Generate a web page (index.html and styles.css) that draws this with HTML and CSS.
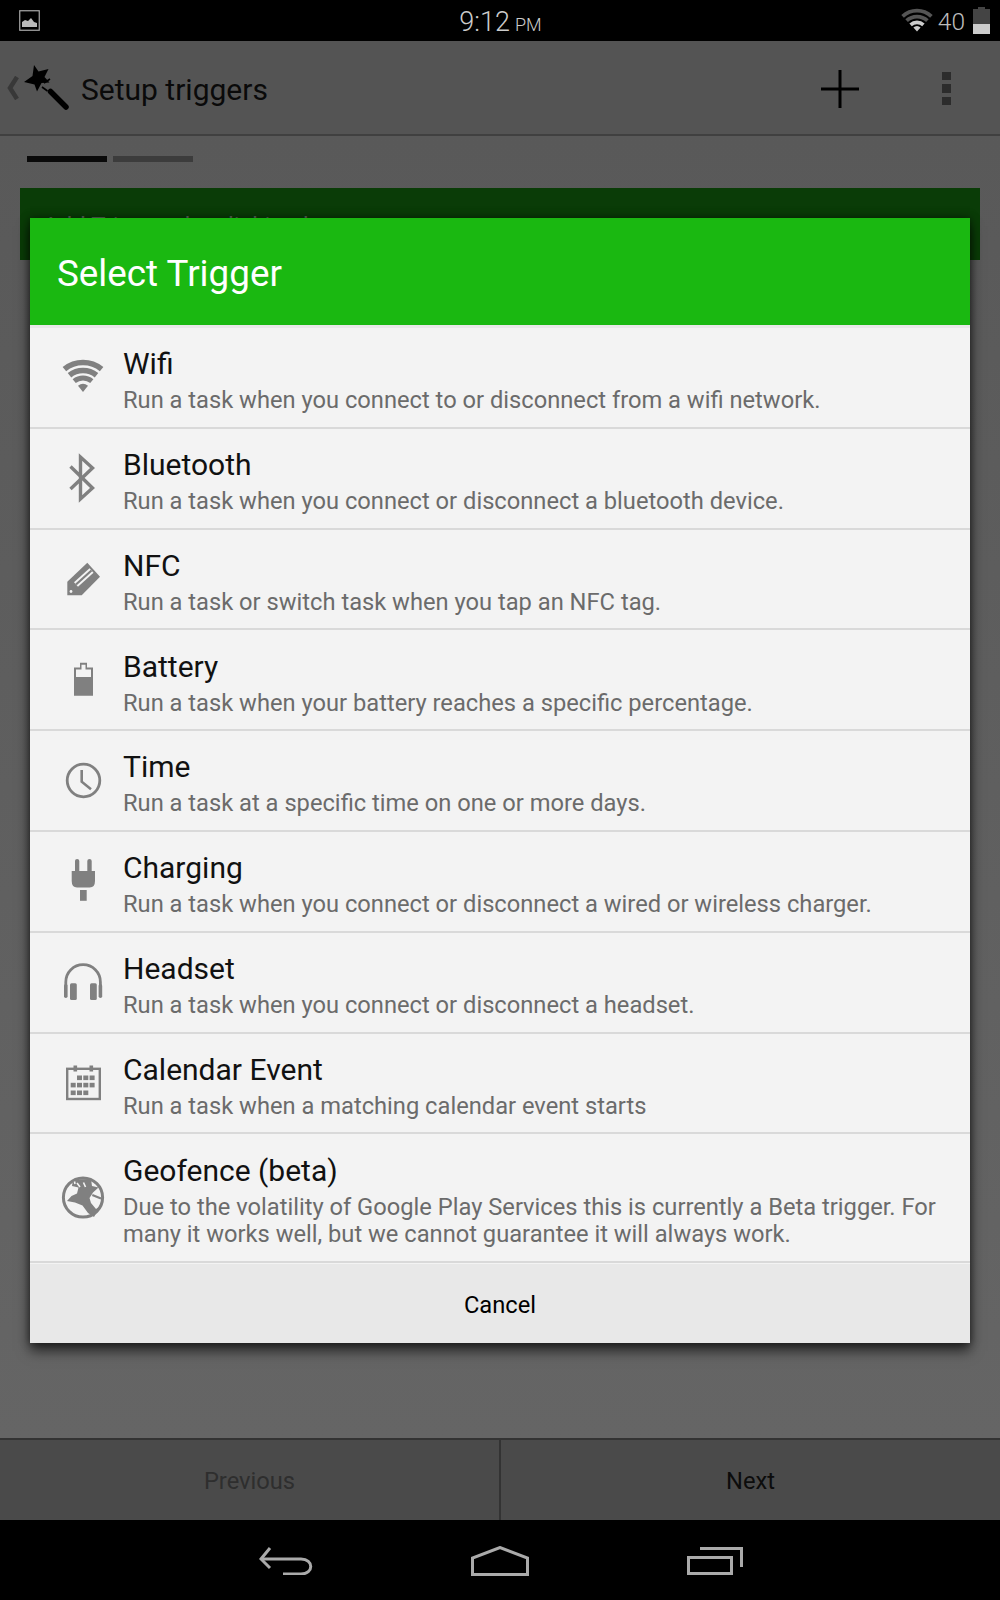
FILE: index.html
```html
<!DOCTYPE html>
<html lang="en">
<head>
  <meta charset="UTF-8" />
  <title>Setup triggers</title>
  <link rel="stylesheet" href="styles.css">
</head>
<body>
  <div class="page">
    <!-- Status bar -->
    <div class="status-bar">
      <svg class="status-image" viewBox="0 0 21 21">
        <rect x="0.75" y="0.75" width="19.5" height="19.5" fill="none" stroke="#aaa" stroke-width="1.2"/>
        <path d="M3 17 V12 L6 10 L9 11 L12 8 L15 12 L18 13 V17z" fill="#bbb"/>
      </svg>
      <div class="status-time">9:12<span class="status-ampm">PM</span></div>
      <div class="status-right">
        <svg class="status-wifi" viewBox="0 0 32 24">
          <g fill="none" stroke-width="3.8">
            <path d="M1.6 8.4 A21 21 0 0 1 30.4 8.4" stroke="#555"/>
            <path d="M5.6 12.7 A15.2 15.2 0 0 1 26.4 12.7" stroke="#555"/>
          </g>
          <path d="M9.6 16.9 A9.4 9.4 0 0 1 22.4 16.9" fill="none" stroke="#ccc" stroke-width="3.6"/>
          <path d="M16 23.5 L12.4 19.6 A5 5 0 0 1 19.6 19.6z" fill="#ccc"/>
        </svg>
        <span class="status-level">40</span>
        <div class="status-battery"><div class="status-charge"></div></div>
      </div>
    </div>

    <!-- Action bar -->
    <div class="action-bar">
      <svg class="up-arrow" viewBox="0 0 12 24"><path d="M10 1 L3 12 L10 23" fill="none" stroke="#383838" stroke-width="4.5"/></svg>
      <svg class="wand" viewBox="0 0 46 46">
        <path d="M11 0 L15.5 6.5 L25.5 4 L21.5 12 L26.5 17.5 L18.5 18 L14 26.5 L11.5 19.5 L1 17 L9.5 11z" fill="#000"/>
        <path d="M27.5 26.5 L43 42" stroke="#000" stroke-width="5.5" stroke-linecap="round"/>
        <path d="M21 18 L27 14 M19 22 L24.5 26" stroke="#000" stroke-width="1.6"/>
      </svg>
      <div class="action-title">Setup triggers</div>
      <div class="action-buttons">
        <svg class="plus" viewBox="0 0 38 38"><path d="M19 0 V38 M0 19 H38" stroke="#000" stroke-width="3"/></svg>
        <div class="overflow"><span></span><span></span><span></span></div>
      </div>
    </div>

    <!-- Wizard content under the dialog -->
    <div class="content">
      <div class="steps"><div class="step step-on"></div><div class="step"></div></div>
      <div class="banner">Add Triggers by clicking here</div>
    </div>

    <div class="wizard-nav">
      <div class="wizard-btn wizard-off">Previous</div>
      <div class="wizard-btn">Next</div>
    </div>

    <!-- System nav -->
    <div class="system-nav">
      <svg class="nav-back" viewBox="0 0 54 28" fill="none" stroke="#aaa" stroke-width="3">
        <path d="M11 1 L2 12 L11 21"/>
        <path d="M2 12 H42 C55 12 55 27 42 27 H24"/>
      </svg>
      <svg class="nav-home" viewBox="0 0 58 30" fill="none" stroke="#aaa" stroke-width="3">
        <path d="M1.5 28.5 V12 L29 1.5 L56.5 12 V28.5z"/>
      </svg>
      <svg class="nav-recent" viewBox="0 0 56 28" fill="none" stroke="#aaa" stroke-width="3">
        <rect x="1.5" y="10.5" width="43" height="16"/>
        <path d="M13 1.5 H54.5 V20"/>
      </svg>
    </div>
  </div>

  <!-- Select Trigger dialog -->
  <div class="dialog">
    <div class="dialog-title">Select Trigger</div>
    <div class="trigger-list">
      <div class="trigger">
        <svg class="trigger-icon" viewBox="0 0 44 52">
          <g fill="none" class="ico-stroke">
            <path d="M3.4 18.1 A29.5 29.5 0 0 1 40.6 18.1" stroke-width="5.6"/>
            <path d="M8.5 24.3 A21.5 21.5 0 0 1 35.5 24.3" stroke-width="5.6"/>
            <path d="M13.2 30.1 A14 14 0 0 1 30.8 30.1" stroke-width="5"/>
          </g>
          <path class="ico-fill" d="M22 41 L17 34.8 A8 8 0 0 1 27 34.8z"/>
        </svg>
        <div class="trigger-text">
          <div class="trigger-name">Wifi</div>
          <div class="trigger-desc">Run a task when you connect to or disconnect from a wifi network.</div>
        </div>
      </div>
      <div class="trigger">
        <svg class="trigger-icon" viewBox="0 0 44 52">
          <path class="ico-stroke" fill="none" stroke-width="3.4" d="M9.5 14.5 L31.5 36 L19.5 47 V5 L31.5 16 L9.5 37"/>
        </svg>
        <div class="trigger-text">
          <div class="trigger-name">Bluetooth</div>
          <div class="trigger-desc">Run a task when you connect or disconnect a bluetooth device.</div>
        </div>
      </div>
      <div class="trigger">
        <svg class="trigger-icon" viewBox="0 0 44 52">
          <path class="ico-fill" d="M6.3 42.2 V28.8 L26.3 9.8 L39 23.8 L20.7 42.2z"/>
          <path d="M15 31.5 L30.5 17.5" stroke="#f3f3f3" stroke-width="6"/>
          <path d="M15 31.5 L30.5 17.5" class="ico-stroke" stroke-width="2.2"/>
          <circle cx="10" cy="38.5" r="1.4" fill="#f3f3f3"/>
        </svg>
        <div class="trigger-text">
          <div class="trigger-name">NFC</div>
          <div class="trigger-desc">Run a task or switch task when you tap an NFC tag.</div>
        </div>
      </div>
      <div class="trigger">
        <svg class="trigger-icon" viewBox="0 0 44 52">
          <path class="ico-fill" d="M13 41.7 V13.5 H19 V8.7 H26 V13.5 H32 V41.7z"/>
          <path d="M15 23 V15.5 H20.5 V10.7 H24.5 V15.5 H30 V23z" fill="#f3f3f3"/>
        </svg>
        <div class="trigger-text">
          <div class="trigger-name">Battery</div>
          <div class="trigger-desc">Run a task when your battery reaches a specific percentage.</div>
        </div>
      </div>
      <div class="trigger">
        <svg class="trigger-icon" viewBox="0 0 44 52">
          <circle class="ico-stroke" cx="22.5" cy="25.5" r="16.3" fill="none" stroke-width="2.8"/>
          <path class="ico-stroke" d="M20.7 15 V26.7 L30 34.3" fill="none" stroke-width="2.6"/>
        </svg>
        <div class="trigger-text">
          <div class="trigger-name">Time</div>
          <div class="trigger-desc">Run a task at a specific time on one or more days.</div>
        </div>
      </div>
      <div class="trigger">
        <svg class="trigger-icon" viewBox="0 0 44 52">
          <path class="ico-fill" d="M14 6 Q14 4 16.1 4 Q18.3 4 18.3 6 V16 H26.3 V6 Q26.3 4 28.5 4 Q30.7 4 30.7 6 V16 H34 V26 Q34 32.5 28.7 32.5 H16 Q10.7 32.5 10.7 26 V16 H14z"/>
          <rect class="ico-fill" x="19" y="35" width="6.7" height="10.8"/>
        </svg>
        <div class="trigger-text">
          <div class="trigger-name">Charging</div>
          <div class="trigger-desc">Run a task when you connect or disconnect a wired or wireless charger.</div>
        </div>
      </div>
      <div class="trigger">
        <svg class="trigger-icon" viewBox="0 0 44 52">
          <path class="ico-stroke" d="M4.8 30 V26 A17.3 17.3 0 0 1 39.4 26 V30" fill="none" stroke-width="2.8"/>
          <rect class="ico-fill" x="3" y="28" width="3.6" height="14" rx="1.8"/>
          <rect class="ico-fill" x="37.6" y="28" width="3.6" height="14" rx="1.8"/>
          <rect class="ico-fill" x="9" y="27.3" width="6.8" height="16.7" rx="1.5"/>
          <rect class="ico-fill" x="29" y="27.3" width="6.8" height="16.7" rx="1.5"/>
        </svg>
        <div class="trigger-text">
          <div class="trigger-name">Headset</div>
          <div class="trigger-desc">Run a task when you connect or disconnect a headset.</div>
        </div>
      </div>
      <div class="trigger">
        <svg class="trigger-icon" viewBox="0 0 44 52">
          <rect class="ico-stroke" x="6.2" y="11.8" width="32.6" height="30.2" fill="none" stroke-width="2.4"/>
          <rect class="ico-fill" x="12.5" y="8.5" width="3.6" height="6"/>
          <rect class="ico-fill" x="28.5" y="8.5" width="3.6" height="6"/>
          <g class="ico-fill">
            <rect x="16" y="18.5" width="5" height="4.6"/><rect x="22.3" y="18.5" width="5" height="4.6"/><rect x="28.6" y="18.5" width="5" height="4.6"/>
            <rect x="9.7" y="25.8" width="5" height="4.6"/><rect x="16" y="25.8" width="5" height="4.6"/><rect x="22.3" y="25.8" width="5" height="4.6"/><rect x="28.6" y="25.8" width="5" height="4.6"/>
            <rect x="9.7" y="33.5" width="5" height="4.6"/><rect x="16" y="33.5" width="5" height="4.6"/><rect x="22.3" y="33.5" width="5" height="4.6"/>
          </g>
        </svg>
        <div class="trigger-text">
          <div class="trigger-name">Calendar Event</div>
          <div class="trigger-desc">Run a task when a matching calendar event starts</div>
        </div>
      </div>
      <div class="trigger trigger-tall">
        <svg class="trigger-icon" viewBox="0 0 44 52">
          <circle class="ico-stroke" cx="22" cy="25.5" r="19.6" fill="none" stroke-width="3"/>
          <path class="ico-fill" d="M12 7.5 L30 7 L31 14 L37.5 15.5 L32 20.5 L28.5 26 L30 31 L35 37 L39 34 L33 45 L27 41 L21.5 33.5 L14 30.5 L6 29 L10.5 24 L16 21.5 L17.5 15.5 L11 14z"/>
          <path class="ico-stroke" d="M31.3 23 L40 26.5" stroke-width="2.2"/>
          <path d="M16 11 L19 15 M22.5 10.5 L24.5 15 M13.5 9.5 L14 12" stroke="#f3f3f3" stroke-width="1.6"/>
        </svg>
        <div class="trigger-text">
          <div class="trigger-name">Geofence (beta)</div>
          <div class="trigger-desc">Due to the volatility of Google Play Services this is currently a Beta trigger. For many it works well, but we cannot guarantee it will always work.</div>
        </div>
      </div>
    </div>
    <div class="dialog-cancel">Cancel</div>
  </div>
</body>
</html>
```
FILE: styles.css
```css
* { box-sizing: border-box; }
body {
  margin: 0;
  font-family: Roboto, "Liberation Sans", sans-serif;
  background: #000;
}
.page {
  height: 1600px;
  display: flex;
  flex-direction: column;
}

/* Status bar */
.status-bar {
  height: 41px;
  background: #000;
  display: grid;
  grid-template-columns: 1fr auto 1fr;
  align-items: center;
  padding-left: 19px;
  flex: none;
}
.status-image { width: 21px; height: 21px; }
.status-time {
  color: #ccc;
  font-size: 27px;
  font-weight: 300;
  padding-top: 2px;
  margin-left: -18px;
}
.status-ampm { font-size: 18px; margin-left: 5px; }
.status-right {
  display: flex;
  align-items: center;
  justify-content: flex-end;
  padding-right: 10px;
}
.status-wifi { width: 32px; height: 24px; margin-right: 5px; margin-top: -1px; }
.status-level { color: #bcbcbc; font-size: 24.5px; font-weight: 300; margin-right: 8px; padding-top: 2px; }
.status-battery {
  width: 17px; height: 25px;
  background: #444;
  position: relative;
  margin-top: 1px;
}
.status-battery::before {
  content: "";
  position: absolute;
  left: 5px; top: -2px;
  width: 7px; height: 2px;
  background: #444;
}
.status-charge {
  position: absolute;
  left: 0; right: 0; bottom: 0;
  height: 10px;
  background: #ccc;
}

/* Action bar */
.action-bar {
  height: 95px;
  flex: none;
  background: #545454;
  border-bottom: 2px solid #404040;
  display: flex;
  align-items: center;
  padding-left: 7px;
}
.up-arrow { width: 12px; height: 24px; }
.wand { width: 46px; height: 46px; margin-left: 4px; }
.action-title {
  font-size: 30px;
  color: #0a0a0a;
  margin-left: 12px;
  flex: 1;
  padding-top: 4px;
}
.action-buttons {
  display: flex;
  align-items: center;
  padding-right: 49px;
  padding-top: 2px;
}
.plus { width: 38px; height: 38px; }
.overflow {
  display: flex;
  flex-direction: column;
  gap: 4px;
  margin-left: 83px;
}
.overflow span { width: 9px; height: 8.5px; background: #2c2c2c; }

/* Wizard content */
.content {
  flex: 1;
  background: linear-gradient(#595959, #656565);
  padding: 20px 20px 0;
}
.steps { display: flex; gap: 6px; padding-left: 7px; }
.step { width: 80px; height: 6px; background: #3c3c3c; }
.step-on { background: #0a0a0a; }
.banner {
  margin-top: 26px;
  height: 72px;
  background: #0a3c07;
  color: #5a6a58;
  font-size: 24px;
  padding: 24px 0 0 23px;
}
.wizard-nav {
  height: 82px;
  flex: none;
  background: #4a4a4a;
  border-top: 2px solid #333;
  display: flex;
}
.wizard-btn {
  flex: 1;
  display: flex;
  align-items: center;
  justify-content: center;
  font-size: 23.7px;
  color: #0c0c0c;
  padding-top: 2px;
}
.wizard-off { color: #2e2e2e; border-right: 2px solid #333; }
.system-nav {
  height: 80px;
  flex: none;
  background: #000;
  display: flex;
  align-items: center;
  justify-content: center;
  gap: 158px;
  padding-left: 2px;
  padding-top: 2px;
}
.nav-back { width: 54px; height: 28px; }
.nav-home { width: 58px; height: 30px; }
.nav-recent { width: 56px; height: 28px; }

/* Dialog */
.dialog {
  position: absolute;
  left: 30px; top: 218px;
  width: 940px;
  height: 1125px;
  background: #f3f3f3;
  box-shadow: 0 8px 12px rgba(0,0,0,0.6), 0 0 8px rgba(0,0,0,0.5);
  display: flex;
  flex-direction: column;
}
.dialog-title {
  height: 107px;
  flex: none;
  background: #1ab811;
  color: #fff;
  font-size: 36.8px;
  display: flex;
  align-items: center;
  padding: 4px 0 0 27px;
}
.trigger-list {
  flex: 1;
  border-top: 3.4px solid #e8e8e8;
}
.trigger {
  height: 100.8px;
  border-bottom: 2px solid #d9d9d9;
  display: flex;
  align-items: center;
  padding-left: 31px;
}
.trigger-tall { height: 129px; }
.trigger-icon { width: 44px; height: 52px; flex: none; margin-right: 18px; }
.ico-fill { fill: #808080; }
.ico-stroke { stroke: #808080; }
.trigger-text { flex: 1; padding-right: 20px; padding-top: 6px; }
.trigger-name { font-size: 30px; line-height: 36px; color: #111; }
.trigger-desc { font-size: 23.7px; line-height: 27.5px; color: #6b6b6b; margin-top: 5px; }
.dialog-cancel {
  height: 79px;
  flex: none;
  background: #e8e8e8;
  display: flex;
  align-items: center;
  justify-content: center;
  font-size: 23.7px;
  color: #000;
  padding-top: 3px;
}
```
